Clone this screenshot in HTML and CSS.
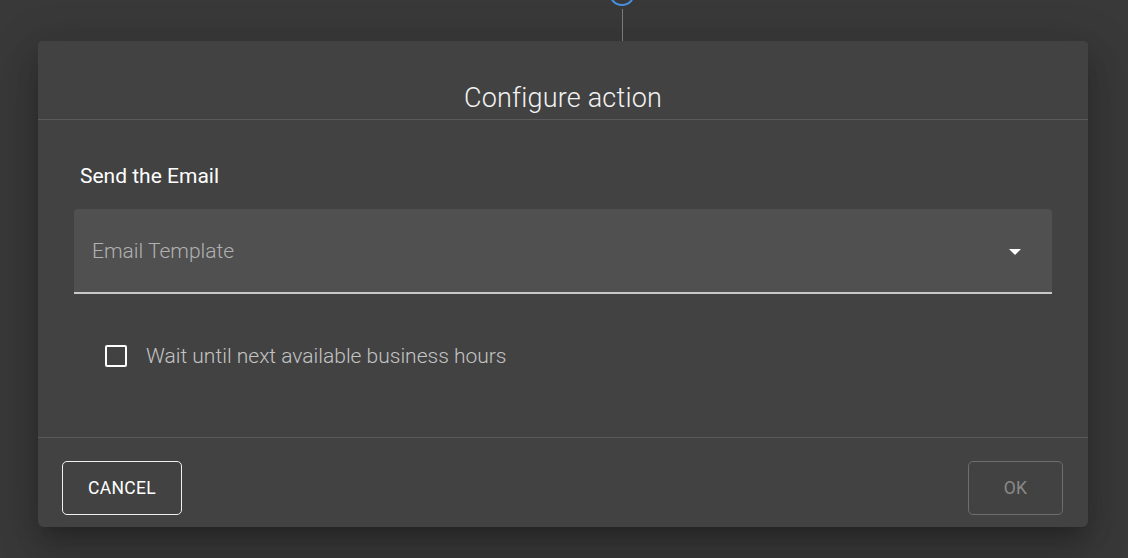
FILE: index.html
```html
<!DOCTYPE html>
<html lang="en">
<head>
<meta charset="utf-8">
<title>Configure action</title>
<link rel="stylesheet" href="styles.css">
</head>
<body>
<div class="page">
  <div class="canvas-top">
    <div class="node"></div>
    <div class="connector"></div>
  </div>
  <div class="dialog">
    <div class="dialog-header">
      <h2 class="dialog-title">Configure action</h2>
    </div>
    <div class="dialog-body">
      <div class="section-label">Send the Email</div>
      <div class="select-field">
        <span class="select-label">Email Template</span>
        <svg class="select-arrow" width="12" height="6" viewBox="0 0 12 6"><path d="M0 0 L12 0 L6 6 Z" fill="#ffffff"/></svg>
      </div>
      <label class="check-row">
        <span class="check-box"></span>
        <span class="check-text">Wait until next available business hours</span>
      </label>
    </div>
    <div class="dialog-footer">
      <button class="btn btn-cancel">CANCEL</button>
      <button class="btn btn-ok" disabled>OK</button>
    </div>
  </div>
</div>
</body>
</html>
```

FILE: styles.css
```css
* { box-sizing: border-box; }
html, body {
  margin: 0;
  padding: 0;
  background: #393939;
  width: 1128px;
  height: 558px;
  overflow: hidden;
  font-family: Roboto, "Liberation Sans", sans-serif;
}
.page {
  display: flex;
  flex-direction: column;
  padding-left: 38px;
}
.canvas-top {
  position: relative;
  height: 41px;
  width: 1050px;
}
.node {
  position: absolute;
  left: 571px;
  top: -20px;
  width: 26px;
  height: 26px;
  border: 2.5px solid #4a8fe0;
  border-radius: 50%;
}
.connector {
  position: absolute;
  left: 584px;
  top: 9px;
  width: 1px;
  height: 32px;
  background: #7a7a7a;
}
.dialog {
  width: 1050px;
  height: 486px;
  background: #424242;
  border-radius: 4px 4px 6px 6px;
  box-shadow: 0 11px 15px -7px rgba(0,0,0,.2), 0 24px 38px 3px rgba(0,0,0,.14), 0 9px 46px 8px rgba(0,0,0,.12);
  display: flex;
  flex-direction: column;
}
.dialog-header {
  height: 79px;
  border-bottom: 1px solid #5a5a5a;
  display: flex;
  justify-content: center;
  align-items: flex-end;
  padding-bottom: 6px;
}
.dialog-title {
  margin: 0;
  font-size: 27px;
  font-weight: 300;
  color: #f2f2f2;
  letter-spacing: 0.2px;
  line-height: 30px;
}
.dialog-body {
  height: 318px;
  border-bottom: 1px solid #595959;
  padding: 44px 36px 0 36px;
  display: flex;
  flex-direction: column;
}
.section-label {
  font-size: 21px;
  font-weight: 400;
  color: #ffffff;
  padding-left: 6px;
  line-height: 24px;
  height: 24px;
}
.select-field {
  margin-top: 21px;
  height: 85px;
  background: #505050;
  border-radius: 4px 4px 0 0;
  border-bottom: 2px solid #c8c8c8;
  display: flex;
  align-items: center;
  padding: 0 31px 0 18px;
}
.select-label {
  flex: 1;
  font-size: 21px;
  font-weight: 300;
  color: #b0b0b0;
  line-height: 24px;
  padding-top: 1px;
}
.select-arrow { display: block; margin-top: 2px; }
.check-row {
  display: flex;
  align-items: center;
  margin-top: 50px;
  padding-left: 31px;
  gap: 19px;
}
.check-box {
  width: 22px;
  height: 22px;
  border: 2px solid #ffffff;
  border-radius: 2px;
}
.check-text {
  font-size: 21px;
  font-weight: 300;
  color: #c4c4c4;
}
.dialog-footer {
  flex: 1;
  display: flex;
  justify-content: space-between;
  align-items: flex-start;
  padding: 23px 25px 0 24px;
}
.btn {
  height: 54px;
  background: transparent;
  border-radius: 5px;
  font-family: Roboto, "Liberation Sans", sans-serif;
  font-size: 17.5px;
  font-weight: 400;
  letter-spacing: 0.3px;
  padding: 0;
}
.btn-cancel {
  width: 120px;
  border: 1px solid #f0f0f0;
  color: #ffffff;
}
.btn-ok {
  width: 95px;
  border: 1px solid #6e6e6e;
  color: #8a8a8a;
}
```
